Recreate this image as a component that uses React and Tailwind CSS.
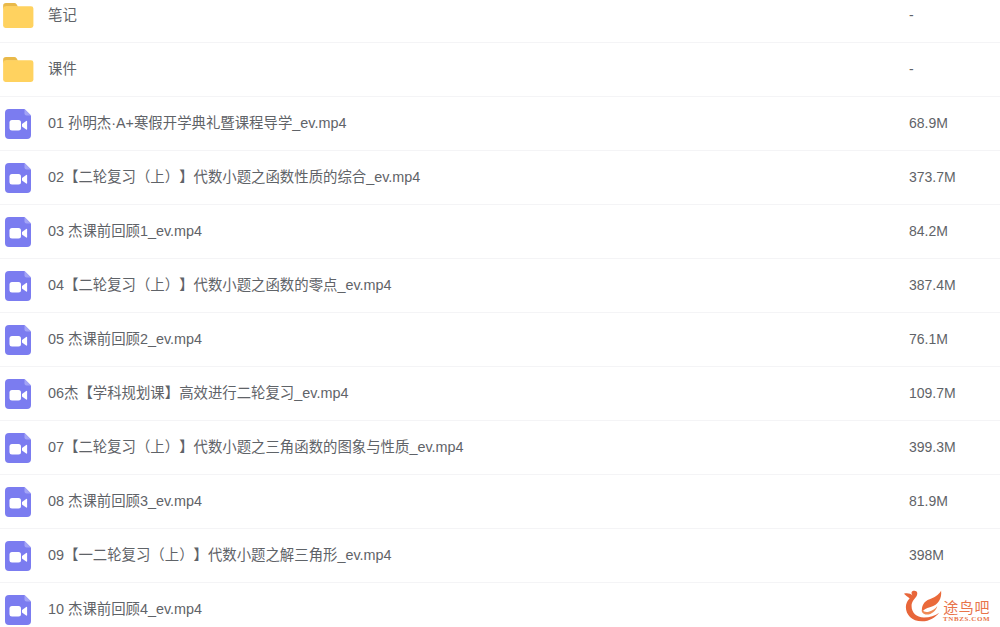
import React from 'react';

const files = [
  { name: '笔记', size: '-', type: 'folder' },
  { name: '课件', size: '-', type: 'folder' },
  { name: '01 孙明杰·A+寒假开学典礼暨课程导学_ev.mp4', size: '68.9M', type: 'video' },
  { name: '02【二轮复习（上）】代数小题之函数性质的综合_ev.mp4', size: '373.7M', type: 'video' },
  { name: '03 杰课前回顾1_ev.mp4', size: '84.2M', type: 'video' },
  { name: '04【二轮复习（上）】代数小题之函数的零点_ev.mp4', size: '387.4M', type: 'video' },
  { name: '05 杰课前回顾2_ev.mp4', size: '76.1M', type: 'video' },
  { name: '06杰【学科规划课】高效进行二轮复习_ev.mp4', size: '109.7M', type: 'video' },
  { name: '07【二轮复习（上）】代数小题之三角函数的图象与性质_ev.mp4', size: '399.3M', type: 'video' },
  { name: '08 杰课前回顾3_ev.mp4', size: '81.9M', type: 'video' },
  { name: '09【一二轮复习（上）】代数小题之解三角形_ev.mp4', size: '398M', type: 'video' },
  { name: '10 杰课前回顾4_ev.mp4', size: '', type: 'video' },
];

const FolderIcon = () => (
  <svg width="31" height="25" viewBox="0 0 32 26" className="ml-[1px]">
    <path d="M0 3a3 3 0 0 1 3-3h8.5a3 3 0 0 1 2.5 1.4L15.5 4H3v2H0z" fill="#e9b949" />
    <rect x="0" y="3.5" width="31.5" height="22.5" rx="2.5" fill="#ffd25f" />
  </svg>
);

const VideoIcon = () => (
  <svg width="26" height="30" viewBox="0 0 26 30" className="ml-[3px] mt-[1px]">
    <path d="M4 0h15.5L26 6.5V26a4 4 0 0 1-4 4H4a4 4 0 0 1-4-4V4a4 4 0 0 1 4-4z" fill="#7b7cf0" />
    <path d="M19.5 0L26 6.5h-4.5a2 2 0 0 1-2-2z" fill="#a3a4f6" />
    <rect x="4.5" y="11" width="11.5" height="10.5" rx="2.5" fill="#ffffff" />
    <path d="M17 15l4.2-3a.6.6 0 0 1 .9.5v7.5a.6.6 0 0 1-.9.5l-4.2-3z" fill="#ffffff" />
  </svg>
);

const Logo = () => (
  <div className="absolute left-[903px] top-[590px] flex items-start">
    <svg width="40" height="33" viewBox="0 0 42 33">
      <path d="M1 3c4-1 7 0 9 2-2-3-1-5 2-5 3 0 4 3 2 6-2 3-5 5-5 10 0 7 5 12 13 12 6 0 12-2 16-5-4 5-10 9-18 9C9 32 3 25 3 17c0-4 2-7 4-9-2-2-4-3-6-5z" fill="#e8663a" />
      <path d="M40 0c1 8-3 15-11 17-5 1-8 3-9 6-1-7 2-12 8-14 5-2 9-4 12-9z" fill="#ea6a3a" />
      <path d="M36 16c-1 5-6 9-11 9-4 0-6-3-5-5 2 2 4 3 7 2 4-1 7-3 9-6z" fill="#f08a55" />
    </svg>
    <div className="mt-[9px] flex flex-col items-center">
      <span className="text-[15px] leading-[16px] tracking-[0.6px] text-[#e8744a] font-['Noto_Sans_CJK_SC',sans-serif]">途鸟吧</span>
      <span className="text-[7px] leading-[8px] tracking-[0.6px] font-bold text-[#e8744a] font-['Liberation_Serif',serif]">TNBZS.COM</span>
    </div>
  </div>
);

export default function App() {
  return (
    <div className="relative h-[627px] w-[1000px] overflow-hidden bg-white font-['Liberation_Sans','Noto_Sans_CJK_SC',sans-serif] text-[14px] text-[#5f6368]">
      <div className="-mt-[11px]">
        {files.map((file) => (
          <div key={file.name} className="flex h-[54px] items-center border-b border-[#f4f4f6]">
            <div className="flex w-[48px] items-center pl-[2px]">
              {file.type === 'folder' ? <FolderIcon /> : <VideoIcon />}
            </div>
            <span className="flex-1 text-[14.4px] [text-spacing-trim:space-all]">{file.name}</span>
            <span className="w-[91px]">{file.size}</span>
          </div>
        ))}
      </div>
      <Logo />
    </div>
  );
}
